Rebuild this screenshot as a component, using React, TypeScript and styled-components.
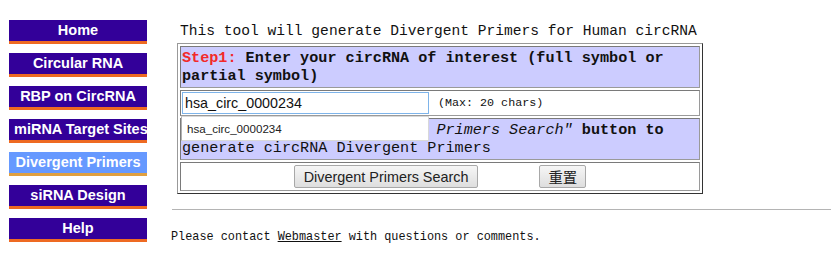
import React from 'react';
import styled, { createGlobalStyle } from 'styled-components';

const GlobalStyle = createGlobalStyle`
  html, body {
    margin: 0;
    padding: 0;
    background: #ffffff;
  }
`;

const Page = styled.div`
  display: flex;
  align-items: flex-start;
  width: 831px;
  height: 264px;
  overflow: hidden;
`;

const Nav = styled.nav`
  display: flex;
  flex-direction: column;
  gap: 9px;
  width: 138px;
  margin: 20px 0 0 9px;
  flex-shrink: 0;
`;

const NavItem = styled.a<INavItem>`
  display: block;
  height: 21px;
  line-height: 21px;
  padding: 0 5px;
  overflow: hidden;
  white-space: nowrap;
  text-align: center;
  text-decoration: none;
  font-family: 'Liberation Sans', Arial, sans-serif;
  font-size: 14.5px;
  font-weight: bold;
  color: #ffffff;
  background: ${p => (p.active ? '#6699ff' : '#330099')};
  border-bottom: 3px solid ${p => (p.active ? '#e0a040' : '#ee6a22')};
`;

const Main = styled.main`
  display: flex;
  flex-direction: column;
  flex: 1;
  margin: 22px 0 0 25px;
`;

const Intro = styled.div`
  padding-left: 8px;
  font-family: 'Liberation Mono', 'Courier New', monospace;
  font-size: 14.6px;
  line-height: 18px;
  color: #111;
`;

const FormTable = styled.table`
  width: 526px;
  margin: 3px 0 0 5px;
  border-collapse: separate;
  border-spacing: 2px;
  border: 1px solid #333;
  border-top-color: #999;
  border-left-color: #999;
  font-family: 'Liberation Mono', 'Courier New', monospace;
  font-size: 15.15px;
  color: #111;
`;

const Cell = styled.td<ICell>`
  position: relative;
  padding: ${p => (p.tight ? '1px' : '2px 1px')};
  line-height: 18px;
  text-align: ${p => (p.center ? 'center' : 'left')};
  background: ${p => (p.shaded ? '#ccccff' : '#ffffff')};
  border: 1px solid #7a7a7a;
  border-bottom-color: #9a9a9a;
  border-right-color: #9a9a9a;
`;

const Step = styled.span`
  color: #f22a2a;
  font-weight: bold;
`;

const Strong = styled.b`
  font-weight: bold;
`;

const Em = styled.i`
  font-style: italic;
`;

const InputRow = styled.div`
  display: flex;
  align-items: center;
  gap: 9px;
`;

const SearchBox = styled.div`
  position: relative;
  width: 247px;
`;

const TextInput = styled.input`
  box-sizing: border-box;
  width: 247px;
  height: 22px;
  margin: 0;
  padding: 0 2px;
  border: 1px solid #7eb4ea;
  outline: none;
  font-family: 'Liberation Sans', Arial, sans-serif;
  font-size: 14.3px;
  color: #111;
  caret-color: #000;
`;

const Hint = styled.span`
  font-size: 11.7px;
`;

const Suggest = styled.ul`
  position: absolute;
  top: 24px;
  left: -1px;
  z-index: 2;
  box-sizing: border-box;
  width: 248px;
  height: 25px;
  margin: 0;
  padding: 0 0 0 5px;
  list-style: none;
  background: #ffffff;
  border: 1px solid #d8d8d8;
  border-left-color: #b0b0b0;
  font-family: 'Liberation Sans', Arial, sans-serif;
  font-size: 11.6px;
  line-height: 23px;
  color: #222;
`;

const Buttons = styled.div`
  display: flex;
  justify-content: center;
  gap: 61px;
  padding: 1px 0;
`;

const Button = styled.button<IButton>`
  height: 23px;
  padding: 0 ${p => (p.compact ? '8px' : '9px')};
  font-family: 'Liberation Sans', Arial, 'Noto Sans CJK SC', sans-serif;
  font-size: 14.4px;
  color: #222;
  background: linear-gradient(#f6f6f6, #dedede);
  border: 1px solid #a8a8a8;
  border-radius: 2px;
`;

const Rule = styled.hr`
  margin: 15px 0 0 0;
  height: 0;
  border: none;
  border-top: 1px solid #b4b4b4;
`;

const Footer = styled.p`
  margin: 20px 0 0 -1px;
  font-family: 'Liberation Mono', 'Courier New', monospace;
  font-size: 11.85px;
  line-height: 14px;
  color: #111;
`;

const Link = styled.a`
  color: #111;
  text-decoration: underline;
`;

const links = [
  'Home',
  'Circular RNA',
  'RBP on CircRNA',
  'miRNA Target Sites',
  'Divergent Primers',
  'siRNA Design',
  'Help',
];

const App = () => {
  const [symbol, setSymbol] = React.useState('hsa_circ_0000234');

  return (
    <>
      <GlobalStyle />
      <Page>
        <Nav>
          {links.map(label => (
            <NavItem key={label} href="#" active={label === 'Divergent Primers'}>
              {label}
            </NavItem>
          ))}
        </Nav>
        <Main>
          <Intro>This tool will generate Divergent Primers for Human circRNA</Intro>
          <FormTable>
            <tbody>
              <tr>
                <Cell shaded>
                  <Step>Step1:</Step> <Strong>Enter your circRNA of interest (full symbol or partial symbol)</Strong>
                </Cell>
              </tr>
              <tr>
                <Cell tight>
                  <InputRow>
                    <SearchBox>
                      <TextInput value={symbol} onChange={e => setSymbol(e.target.value)} autoFocus />
                      <Suggest>
                        <li>hsa_circ_0000234</li>
                      </Suggest>
                    </SearchBox>
                    <Hint>(Max: 20 chars)</Hint>
                  </InputRow>
                </Cell>
              </tr>
              <tr>
                <Cell shaded>
                  <Step>Step2:</Step> <Strong>Click the "</Strong>
                  <Em>Divergent Primers Search"</Em> <Strong>button to</Strong> generate circRNA Divergent Primers
                </Cell>
              </tr>
              <tr>
                <Cell tight center>
                  <Buttons>
                    <Button type="button">Divergent Primers Search</Button>
                    <Button type="button" compact>重置</Button>
                  </Buttons>
                </Cell>
              </tr>
            </tbody>
          </FormTable>
          <Rule />
          <Footer>
            Please contact <Link href="#">Webmaster</Link> with questions or comments.
          </Footer>
        </Main>
      </Page>
    </>
  );
};

interface INavItem {
  active?: boolean;
}

interface ICell {
  shaded?: boolean;
  tight?: boolean;
  center?: boolean;
}

interface IButton {
  compact?: boolean;
}

export default App;
